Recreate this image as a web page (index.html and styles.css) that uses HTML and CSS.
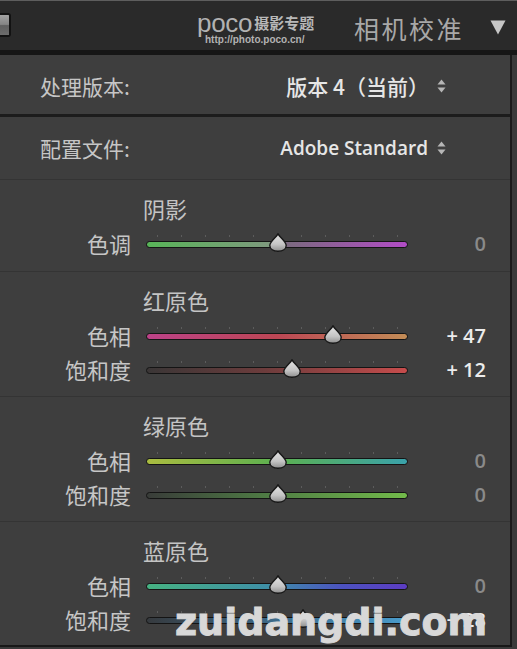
FILE: index.html
```html
<!DOCTYPE html>
<html lang="zh-CN">
<head>
<meta charset="utf-8">
<title>相机校准</title>
<link rel="stylesheet" href="styles.css">
</head>
<body>
<div class="app">
  <svg class="defs" aria-hidden="true">
    <defs>
      <linearGradient id="thumbFill" x1="0" y1="0" x2="0" y2="1">
        <stop offset="0" stop-color="#e4e4e4"/>
        <stop offset="0.6" stop-color="#c4c4c4"/>
        <stop offset="1" stop-color="#8e8e8e"/>
      </linearGradient>
    </defs>
  </svg>

  <header class="header">
    <div class="tab-btn"></div>
    <div class="logo">
      <div class="logo-top"><span class="poco">poco</span><span class="logo-cn">摄影专题</span></div>
      <div class="logo-url">http://photo.poco.cn/</div>
    </div>
    <h1 class="title">相机校准</h1>
    <svg class="collapse" viewBox="0 0 16 15"><polygon points="0.5,0.5 15.5,0.5 8,14.5" fill="#c6c6c6"/></svg>
  </header>
  <div class="band"></div>

  <div class="body">
    <div class="panel">
      <div class="row-select first">
        <span class="sel-label">处理版本:</span>
        <span class="sel-value">版本 4（当前）</span>
        <svg class="updown" viewBox="0 0 9 14"><polygon points="0.5,5.5 4.5,0.5 8.5,5.5" fill="#b6b6b6"/><polygon points="0.5,8.5 4.5,13.5 8.5,8.5" fill="#b6b6b6"/></svg>
      </div>
      <div class="row-select second">
        <span class="sel-label">配置文件:</span>
        <span class="sel-value latin">Adobe Standard</span>
        <svg class="updown" viewBox="0 0 9 14"><polygon points="0.5,5.5 4.5,0.5 8.5,5.5" fill="#b6b6b6"/><polygon points="0.5,8.5 4.5,13.5 8.5,8.5" fill="#b6b6b6"/></svg>
      </div>

      <section class="group g-shadow">
        <div class="group-title">阴影</div>
        <div class="slider-row">
          <span class="s-label">色调</span>
          <div class="slider">
            <div class="ticks"></div>
            <div class="track t-shadow"></div>
            <svg class="thumb" style="left:123px" viewBox="0 0 18 19"><path d="M9 0.8C11 4.5 17.2 8.5 17.2 12.5C17.2 16.2 13.5 18.3 9 18.3C4.5 18.3 0.8 16.2 0.8 12.5C0.8 8.5 7 4.5 9 0.8Z" fill="url(#thumbFill)" stroke="#161616" stroke-width="1.4"/></svg>
          </div>
          <span class="s-value zero">0</span>
        </div>
      </section>

      <section class="group g-red">
        <div class="group-title">红原色</div>
        <div class="slider-row">
          <span class="s-label">色相</span>
          <div class="slider">
            <div class="ticks"></div>
            <div class="track t-red-hue"></div>
            <svg class="thumb" style="left:178px" viewBox="0 0 18 19"><path d="M9 0.8C11 4.5 17.2 8.5 17.2 12.5C17.2 16.2 13.5 18.3 9 18.3C4.5 18.3 0.8 16.2 0.8 12.5C0.8 8.5 7 4.5 9 0.8Z" fill="url(#thumbFill)" stroke="#161616" stroke-width="1.4"/></svg>
          </div>
          <span class="s-value">+ 47</span>
        </div>
        <div class="slider-row">
          <span class="s-label">饱和度</span>
          <div class="slider">
            <div class="ticks"></div>
            <div class="track t-red-sat"></div>
            <svg class="thumb" style="left:137px" viewBox="0 0 18 19"><path d="M9 0.8C11 4.5 17.2 8.5 17.2 12.5C17.2 16.2 13.5 18.3 9 18.3C4.5 18.3 0.8 16.2 0.8 12.5C0.8 8.5 7 4.5 9 0.8Z" fill="url(#thumbFill)" stroke="#161616" stroke-width="1.4"/></svg>
          </div>
          <span class="s-value">+ 12</span>
        </div>
      </section>

      <section class="group g-green">
        <div class="group-title">绿原色</div>
        <div class="slider-row">
          <span class="s-label">色相</span>
          <div class="slider">
            <div class="ticks"></div>
            <div class="track t-green-hue"></div>
            <svg class="thumb" style="left:123px" viewBox="0 0 18 19"><path d="M9 0.8C11 4.5 17.2 8.5 17.2 12.5C17.2 16.2 13.5 18.3 9 18.3C4.5 18.3 0.8 16.2 0.8 12.5C0.8 8.5 7 4.5 9 0.8Z" fill="url(#thumbFill)" stroke="#161616" stroke-width="1.4"/></svg>
          </div>
          <span class="s-value zero">0</span>
        </div>
        <div class="slider-row">
          <span class="s-label">饱和度</span>
          <div class="slider">
            <div class="ticks"></div>
            <div class="track t-green-sat"></div>
            <svg class="thumb" style="left:123px" viewBox="0 0 18 19"><path d="M9 0.8C11 4.5 17.2 8.5 17.2 12.5C17.2 16.2 13.5 18.3 9 18.3C4.5 18.3 0.8 16.2 0.8 12.5C0.8 8.5 7 4.5 9 0.8Z" fill="url(#thumbFill)" stroke="#161616" stroke-width="1.4"/></svg>
          </div>
          <span class="s-value zero">0</span>
        </div>
      </section>

      <section class="group g-blue">
        <div class="group-title">蓝原色</div>
        <div class="slider-row">
          <span class="s-label">色相</span>
          <div class="slider">
            <div class="ticks"></div>
            <div class="track t-blue-hue"></div>
            <svg class="thumb" style="left:123px" viewBox="0 0 18 19"><path d="M9 0.8C11 4.5 17.2 8.5 17.2 12.5C17.2 16.2 13.5 18.3 9 18.3C4.5 18.3 0.8 16.2 0.8 12.5C0.8 8.5 7 4.5 9 0.8Z" fill="url(#thumbFill)" stroke="#161616" stroke-width="1.4"/></svg>
          </div>
          <span class="s-value zero">0</span>
        </div>
        <div class="slider-row">
          <span class="s-label">饱和度</span>
          <div class="slider">
            <div class="ticks"></div>
            <div class="track t-blue-sat"></div>
            <svg class="thumb" style="left:148px" viewBox="0 0 18 19"><path d="M9 0.8C11 4.5 17.2 8.5 17.2 12.5C17.2 16.2 13.5 18.3 9 18.3C4.5 18.3 0.8 16.2 0.8 12.5C0.8 8.5 7 4.5 9 0.8Z" fill="url(#thumbFill)" stroke="#161616" stroke-width="1.4"/></svg>
          </div>
          <span class="s-value">+ 28</span>
        </div>
      </section>
    </div>
    <div class="edge"></div>
  </div>

  <div class="watermark">zuidangdi.com</div>
</div>
</body>
</html>
```

FILE: styles.css
```css
* { box-sizing: border-box; }

body {
  margin: 0;
  background: #3a3a3a;
}

.app {
  position: relative;
  width: 517px;
  height: 649px;
  overflow: hidden;
  background: #3a3a3a;
  font-family: "Noto Sans CJK SC", "Noto Sans", sans-serif;
}

.defs {
  position: absolute;
  width: 0;
  height: 0;
}

/* ---------- header ---------- */
.header {
  height: 50px;
  border-top: 1px solid #5e5e5e;
  background: #2a2a2a;
  display: flex;
  align-items: flex-start;
}

.tab-btn {
  width: 11px;
  height: 24px;
  margin-top: 12px;
  border: 2px solid #121212;
  border-left: 0;
  border-radius: 0 3px 3px 0;
  background: linear-gradient(#a2a2a2, #858585 47%, #5f5f5f 53%, #6c6c6c);
}

.logo {
  margin-left: 186px;
  margin-top: 10px;
  width: 122px;
}

.logo-top {
  display: flex;
  align-items: flex-end;
  gap: 2px;
  height: 22px;
}

.poco {
  display: block;
  height: 20px;
  font-family: "Liberation Sans", sans-serif;
  font-size: 26px;
  line-height: 20px;
  letter-spacing: -0.3px;
  color: #b2b2b2;
}

.logo-cn {
  display: block;
  height: 18px;
  margin-bottom: 1px;
  font-size: 15px;
  font-weight: 700;
  line-height: 18px;
  color: #b8b8b8;
}

.logo-url {
  margin-left: 8px;
  padding-top: 1px;
  font-family: "Liberation Sans", sans-serif;
  font-weight: 700;
  font-size: 10px;
  line-height: 11px;
  color: #b2b2b2;
}

.title {
  margin: 12px 0 0 35px;
  font-size: 25px;
  font-weight: 400;
  line-height: 30px;
  letter-spacing: 2.5px;
  color: #a8a8a8;
}

.collapse {
  width: 16px;
  height: 15px;
  margin: 19px 0 0 26px;
}

.band {
  height: 5px;
  background: #161616;
}

/* ---------- panel ---------- */
.body {
  width: 512px;
  height: 592px;
  display: flex;
  border-bottom: 2px solid #181818;
}

.panel {
  width: 510px;
  display: flex;
  flex-direction: column;
  background: #3e3e3e;
}

.edge {
  width: 2px;
  background: #1a1a1a;
}

.row-select {
  display: flex;
  align-items: center;
  padding: 0 64px 0 40px;
  font-size: 21px;
  color: #c6c6c6;
}

.row-select.first {
  height: 62px;
  padding-top: 2px;
  border-bottom: 3px solid #1c1c1c;
}

.row-select.second {
  height: 63px;
  border-bottom: 1px solid #343434;
}

.sel-value {
  margin-left: auto;
  margin-right: 8px;
  font-size: 21px;
  font-weight: 500;
  color: #e6e6e6;
}

.sel-value.latin {
  margin-right: 9px;
  font-family: "Open Sans", sans-serif;
  font-weight: 600;
  font-size: 19px;
}

.updown {
  width: 9px;
  height: 14px;
}

/* ---------- slider groups ---------- */
.group {
  padding-top: 15px;
  border-bottom: 1px solid #343434;
}

.g-shadow { height: 92px; }
.g-red, .g-green { height: 125px; }
.g-blue { height: 123px; border-bottom: 0; }

.group-title {
  height: 26px;
  margin-bottom: 5px;
  padding-left: 143px;
  font-size: 22px;
  line-height: 26px;
  color: #c4c4c4;
}

.slider-row {
  display: grid;
  grid-template-columns: 131px 262px 1fr;
  column-gap: 15px;
  align-items: center;
  height: 34px;
  padding-right: 24px;
}

.s-label {
  text-align: right;
  font-size: 22px;
  line-height: 34px;
  color: #c6c6c6;
}

.slider {
  position: relative;
  height: 34px;
}

.ticks {
  position: absolute;
  left: 11px;
  top: 9px;
  width: 241px;
  height: 2px;
  background: repeating-linear-gradient(to right, #5c5c5c 0 1px, transparent 1px 24px);
}

.track {
  position: absolute;
  left: 0;
  right: 0;
  top: 15px;
  height: 7px;
  border: 1px solid #141414;
  border-radius: 4px;
}

.t-shadow    { background: linear-gradient(to right, #58b458, #7e9a7e 47%, #7a6a7e 53%, #b24cc6); }
.t-red-hue   { background: linear-gradient(to right, #bc4288, #bc4654 50%, #c28c56); }
.t-red-sat   { background: linear-gradient(to right, #3a3636, #6c3c3c 45%, #c64c4c); }
.t-green-hue { background: linear-gradient(to right, #aabc40, #5cb050 50%, #3aa2aa); }
.t-green-sat { background: linear-gradient(to right, #393c39, #4e7a44 45%, #72ba4a); }
.t-blue-hue  { background: linear-gradient(to right, #46b282, #3e8ea8 48%, #4c52c0 75%, #5c3cc2); }
.t-blue-sat  { background: linear-gradient(to right, #363a3e, #3c6a8a 50%, #4a9ccc); }

.thumb {
  position: absolute;
  top: 7px;
  width: 18px;
  height: 19px;
}

.s-value {
  text-align: right;
  font-family: "Open Sans", sans-serif;
  font-size: 20px;
  font-weight: 600;
  color: #ececec;
}

.s-value.zero {
  color: #8a8a8a;
}

/* ---------- watermark ---------- */
.watermark {
  position: absolute;
  left: 175px;
  top: 603px;
  font-family: "DejaVu Sans", sans-serif;
  font-weight: 700;
  font-size: 38px;
  line-height: 1;
  color: #d8d8d8;
  -webkit-text-stroke: 1px #d8d8d8;
  white-space: nowrap;
}
```
